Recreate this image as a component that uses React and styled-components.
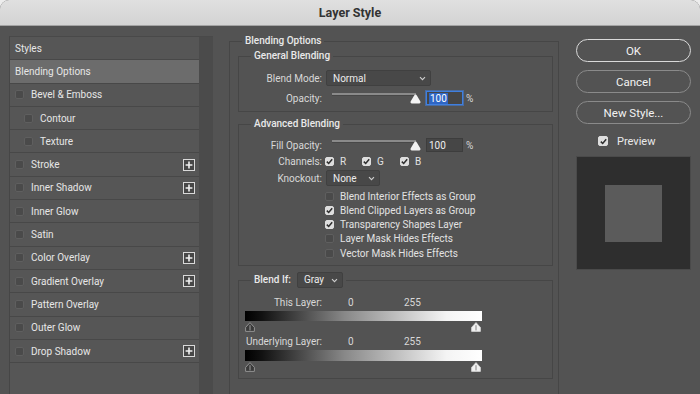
import React from 'react';
import styled, { createGlobalStyle } from 'styled-components';

const Global = createGlobalStyle`
  html, body { margin: 0; padding: 0; background: #ededed; }
  body { font-family: Roboto, "Liberation Sans", Arial, sans-serif; }
  #root { width: 700px; height: 394px; }
`;

const Window = styled.div`
  width: 700px;
  height: 394px;
  display: flex;
  flex-direction: column;
  overflow: hidden;
  border-radius: 9px 9px 0 0;
  background: #535353;
`;

const TitleBar = styled.div`
  height: 25px;
  flex: none;
  display: flex;
  align-items: center;
  justify-content: center;
  background: linear-gradient(#e0e0e0, #d3d3d3);
  border-bottom: 1px solid #a3a3a3;
  font-size: 12.5px;
  font-weight: 700;
  color: #333;
`;

const Body = styled.div`
  flex: 1;
  min-height: 0;
  display: flex;
  padding: 9px 10px 0 9px;
  overflow: hidden;
`;

/* ---------- Sidebar ---------- */
const Sidebar = styled.div`
  width: 203px;
  flex: none;
  margin-top: 1px;
  display: flex;
  border-left: 1px solid #464646;
  border-top: 1px solid #494949;
`;

const List = styled.div`
  flex: 1;
  display: flex;
  flex-direction: column;
  background: #565656;
`;

const Track = styled.div`
  width: 14px;
  flex: none;
  background: #4b4b4b;
`;

const Row = styled.div`
  height: 22.3px;
  flex: none;
  border-bottom: 1px solid #484848;
  display: flex;
  align-items: center;
  gap: 7px;
  padding-left: ${p => (p.$indent ? 14 : 5)}px;
  padding-right: 4px;
  background: ${p => (p.$active ? '#6c6c6c' : 'transparent')};
  font-size: 10px;
  color: #e6e6e6;
`;

const RowText = styled.span`
  flex: 1;
`;

const Box = styled.span`
  width: ${p => p.$size || 9}px;
  height: ${p => p.$size || 9}px;
  box-sizing: border-box;
  flex: none;
  border-radius: 2px;
  background: ${p => (p.$on ? '#dedede' : '#4a4a4a')};
  border: 1px solid ${p => (p.$on ? '#dedede' : '#5f5f5f')};
  display: flex;
  align-items: center;
  justify-content: center;
`;

const Check = ({ on, size }) => (
  <Box $on={on} $size={size}>
    {on && (
      <svg width="7" height="7" viewBox="0 0 7 7">
        <path d="M0.8 3.6 L2.7 5.5 L6.2 1.2" stroke="#2e2e2e" strokeWidth="1.5" fill="none" />
      </svg>
    )}
  </Box>
);

const Plus = () => (
  <svg width="12" height="12" viewBox="0 0 12 12">
    <rect x="0.5" y="0.5" width="11" height="11" fill="#474747" stroke="#d9d9d9" />
    <path d="M6 2.6 V9.4 M2.6 6 H9.4" stroke="#f0f0f0" strokeWidth="1.6" />
  </svg>
);

/* ---------- Main ---------- */
const Main = styled.div`
  width: 330px;
  flex: none;
  margin-left: 16px;
  display: flex;
  flex-direction: column;
`;

const Group = styled.fieldset`
  margin: 0;
  min-width: 0;
  border: 1px solid #464646;
  padding: ${p => p.$pad};
  display: flex;
  flex-direction: column;
  gap: ${p => p.$gap || 0}px;
`;

const Legend = styled.legend`
  padding: 0 3px;
  margin-left: ${p => p.$ml}px;
  font-size: 10px;
  line-height: 12px;
  color: #e9e9e9;
  font-weight: 500;
  display: flex;
  align-items: center;
`;

const FormRow = styled.div`
  display: flex;
  align-items: center;
  height: ${p => p.$h || 16}px;
  margin-top: ${p => p.$mt || 0}px;
  flex: none;
`;

const Label = styled.span`
  width: ${p => p.$w || 83}px;
  flex: none;
  text-align: right;
  font-size: 10px;
  color: #d8d8d8;
`;

const Select = styled.div`
  width: ${p => p.$w}px;
  height: 16px;
  box-sizing: border-box;
  margin-left: ${p => (p.$ml === undefined ? 4 : p.$ml)}px;
  background: #484848;
  border: 1px solid #404040;
  border-radius: 2px;
  display: flex;
  align-items: center;
  justify-content: space-between;
  padding: 0 4px 0 6px;
  font-size: 10px;
  font-weight: 400;
  color: #ececec;
`;

const Chevron = () => (
  <svg width="7" height="5" viewBox="0 0 7 5">
    <path d="M1 1.2 L3.5 3.7 L6 1.2" stroke="#cfcfcf" strokeWidth="1.1" fill="none" />
  </svg>
);

const Slider = styled.div`
  position: relative;
  width: 90px;
  height: 16px;
  margin-left: 10px;
  flex: none;
`;

const SliderTrack = styled.div`
  position: absolute;
  left: 0;
  top: 3px;
  width: 84px;
  height: 2px;
  background: #8a8a8a;
  border-bottom: 1px solid #474747;
`;

const ThumbWrap = styled.div`
  position: absolute;
  left: 78px;
  top: 4px;
  width: 11px;
  height: 10px;
  display: flex;
`;

const Thumb = () => (
  <ThumbWrap>
    <svg width="11" height="10" viewBox="0 0 11 10">
      <path
        d="M5.5 0.6 Q6.3 0.6 7 1.8 L10.4 7.6 Q11 9.4 9.4 9.4 L1.6 9.4 Q0 9.4 0.6 7.6 L4 1.8 Q4.7 0.6 5.5 0.6 Z"
        fill="#f3f3f3"
      />
    </svg>
  </ThumbWrap>
);

const NumInput = styled.div`
  width: 37px;
  height: 14px;
  margin-left: 4px;
  box-sizing: border-box;
  background: #464646;
  border: 1px solid ${p => (p.$focus ? '#3f7fe0' : '#3d3d3d')};
  box-shadow: ${p => (p.$focus ? '0 0 0 1px rgba(63,127,224,0.55)' : 'none')};
  display: flex;
  align-items: center;
  padding-left: 2px;
  font-size: 10px;
  color: #efefef;
`;

const Selected = styled.span`
  background: #2f66c4;
  color: #fff;
  padding: 0 1px;
  line-height: 11px;
`;

const Percent = styled.span`
  margin-left: 3px;
  font-size: 10px;
  color: #d8d8d8;
`;

const Channel = styled.span`
  width: ${p => p.$w}px;
  flex: none;
  display: flex;
  align-items: center;
  gap: 6px;
  font-size: 10px;
  color: #e2e2e2;
`;

const ChannelGroup = styled.div`
  display: flex;
  margin-left: 3px;
`;

const CheckList = styled.div`
  display: flex;
  flex-direction: column;
  padding-left: 86px;
  margin-top: 3px;
`;

const CheckRow = styled.div`
  height: 14.25px;
  display: flex;
  align-items: center;
  gap: 6px;
  font-size: 10px;
  color: #e2e2e2;
`;

const BlendLabel = styled.span`
  margin-right: 6px;
`;

const BlendBody = styled.div`
  display: flex;
  flex-direction: column;
  padding-left: 6px;
  width: 237px;
`;

const Value = styled.span`
  width: ${p => p.$w}px;
  flex: none;
  font-size: 10px;
  color: #d8d8d8;
`;

const GradientBar = styled.div`
  width: 237px;
  height: ${p => p.$h}px;
  margin-top: 3px;
  background: linear-gradient(90deg, #000 0%, #111 7%, #888 42%, #f4f4f4 85%, #fff 100%);
`;

const ThumbRow = styled.div`
  display: flex;
  justify-content: space-between;
  padding: 0 1px 0 0;
  height: 10px;
  margin-top: 1px;
`;

const SplitThumb = ({ light }) => (
  <svg width="10" height="10" viewBox="0 0 10 10">
    <path
      d="M5 0.6 L9.4 5.4 L9.4 9.4 L0.6 9.4 L0.6 5.4 Z"
      fill={light ? '#f2f2f2' : '#3a3a3a'}
      stroke={light ? '#cfcfcf' : '#9a9a9a'}
      strokeWidth="0.9"
      strokeLinejoin="round"
    />
    <path d="M5 3.2 V8.4" stroke={light ? '#777' : '#aaa'} strokeWidth="0.9" />
  </svg>
);

/* ---------- Right side ---------- */
const Side = styled.div`
  width: 115px;
  flex: none;
  margin-left: 17px;
  margin-top: 4px;
  display: flex;
  flex-direction: column;
`;

const Button = styled.div`
  height: 23px;
  box-sizing: border-box;
  border-radius: 12px;
  border: ${p => (p.$primary ? '1.5px solid #d9d9d9' : '1px solid #8a8a8a')};
  margin-top: ${p => p.$mt || 0}px;
  display: flex;
  align-items: center;
  justify-content: center;
  font-size: 11.5px;
  color: #f2f2f2;
`;

const PreviewToggle = styled.div`
  display: flex;
  align-items: center;
  gap: 9px;
  height: 12px;
  margin-top: 11px;
  padding-left: 22px;
  font-size: 11px;
  color: #eaeaea;
`;

const PreviewBox = styled.div`
  height: 114px;
  margin-top: 9px;
  box-sizing: border-box;
  background: #2e2e2e;
  border: 1px solid #4a4a4a;
  display: flex;
  align-items: center;
  justify-content: center;
`;

const PreviewSquare = styled.div`
  width: 57px;
  height: 57px;
  background: #5b5b5b;
`;

const styles = [
  { t: 'Styles' },
  { t: 'Blending Options', active: true },
  { t: 'Bevel & Emboss', cb: true },
  { t: 'Contour', cb: true, indent: true },
  { t: 'Texture', cb: true, indent: true },
  { t: 'Stroke', cb: true, plus: true },
  { t: 'Inner Shadow', cb: true, plus: true },
  { t: 'Inner Glow', cb: true },
  { t: 'Satin', cb: true },
  { t: 'Color Overlay', cb: true, plus: true },
  { t: 'Gradient Overlay', cb: true, plus: true },
  { t: 'Pattern Overlay', cb: true },
  { t: 'Outer Glow', cb: true },
  { t: 'Drop Shadow', cb: true, plus: true },
];

const options = [
  ['Blend Interior Effects as Group', false],
  ['Blend Clipped Layers as Group', true],
  ['Transparency Shapes Layer', true],
  ['Layer Mask Hides Effects', false],
  ['Vector Mask Hides Effects', false],
];

export default function App() {
  return (
    <>
      <Global />
      <Window>
        <TitleBar>Layer Style</TitleBar>
        <Body>
          <Sidebar>
            <List>
              {styles.map(s => (
                <Row key={s.t} $active={s.active} $indent={s.indent}>
                  {s.cb && <Check />}
                  <RowText>{s.t}</RowText>
                  {s.plus && <Plus />}
                </Row>
              ))}
            </List>
            <Track />
          </Sidebar>

          <Main>
            <Group $pad="3px 5px 60px 8px" $gap={6}>
              <Legend $ml={4}>Blending Options</Legend>

              <Group $pad="8px 0 5px 0">
                <Legend $ml={12}>General Blending</Legend>
                <FormRow>
                  <Label>Blend Mode:</Label>
                  <Select $w={105}>
                    Normal <Chevron />
                  </Select>
                </FormRow>
                <FormRow $mt={4}>
                  <Label>Opacity:</Label>
                  <Slider>
                    <SliderTrack />
                    <Thumb />
                  </Slider>
                  <NumInput $focus>
                    <Selected>100</Selected>
                  </NumInput>
                  <Percent>%</Percent>
                </FormRow>
              </Group>

              <Group $pad="7px 0 5px 0">
                <Legend $ml={12}>Advanced Blending</Legend>
                <FormRow>
                  <Label>Fill Opacity:</Label>
                  <Slider>
                    <SliderTrack />
                    <Thumb />
                  </Slider>
                  <NumInput>100</NumInput>
                  <Percent>%</Percent>
                </FormRow>
                <FormRow>
                  <Label>Channels:</Label>
                  <ChannelGroup>
                    <Channel $w={37}>
                      <Check on /> R
                    </Channel>
                    <Channel $w={38}>
                      <Check on /> G
                    </Channel>
                    <Channel $w={20}>
                      <Check on /> B
                    </Channel>
                  </ChannelGroup>
                </FormRow>
                <FormRow $mt={1}>
                  <Label>Knockout:</Label>
                  <Select $w={54}>
                    None <Chevron />
                  </Select>
                </FormRow>
                <CheckList>
                  {options.map(([t, on]) => (
                    <CheckRow key={t}>
                      <Check on={on} />
                      {t}
                    </CheckRow>
                  ))}
                </CheckList>
              </Group>

              <Group $pad="8px 0 6px 0">
                <Legend $ml={12}>
                  <BlendLabel>Blend If:</BlendLabel>
                  <Select $w={46} $ml={0}>
                    Gray <Chevron />
                  </Select>
                </Legend>
                <BlendBody>
                  <FormRow $h={12}>
                    <Label $w={77}>This Layer:</Label>
                    <Value $w={26} />
                    <Value $w={56}>0</Value>
                    <Value $w={30}>255</Value>
                  </FormRow>
                  <GradientBar $h={10} />
                  <ThumbRow>
                    <SplitThumb />
                    <SplitThumb light />
                  </ThumbRow>
                  <FormRow $h={12} $mt={3}>
                    <Label $w={77}>Underlying Layer:</Label>
                    <Value $w={26} />
                    <Value $w={56}>0</Value>
                    <Value $w={30}>255</Value>
                  </FormRow>
                  <GradientBar $h={11} />
                  <ThumbRow>
                    <SplitThumb />
                    <SplitThumb light />
                  </ThumbRow>
                </BlendBody>
              </Group>
            </Group>
          </Main>

          <Side>
            <Button $primary>OK</Button>
            <Button $mt={8}>Cancel</Button>
            <Button $mt={8}>New Style...</Button>
            <PreviewToggle>
              <Check on size={10} />
              Preview
            </PreviewToggle>
            <PreviewBox>
              <PreviewSquare />
            </PreviewBox>
          </Side>
        </Body>
      </Window>
    </>
  );
}
